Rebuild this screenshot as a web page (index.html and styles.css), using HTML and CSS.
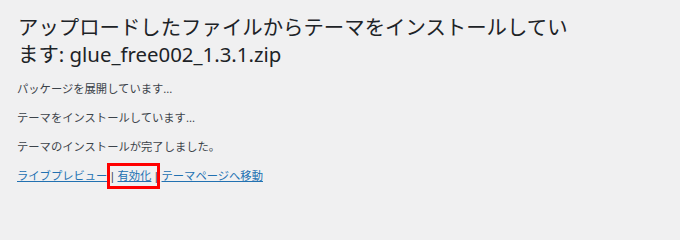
FILE: index.html
```html
<!DOCTYPE html>
<html lang="ja">
<head>
<meta charset="utf-8">
<link rel="stylesheet" href="styles.css">
</head>
<body>
<div class="wrap">
  <h1 class="title">アップロードしたファイルからテーマをインストールしています: glue_free002_1.3.1.zip</h1>
  <p class="msg">パッケージを展開しています...</p>
  <p class="msg">テーマをインストールしています...</p>
  <p class="msg">テーマのインストールが完了しました。</p>
  <p class="msg actions"><a href="#">ライブプレビュー</a> <span class="mark">| <a href="#">有効化</a> |</span> <a href="#">テーマページへ移動</a></p>
</div>
</body>
</html>
```
FILE: styles.css
```css
html, body {
  margin: 0;
  padding: 0;
  background: #f0f0f1;
}
body {
  font-family: "Noto Sans", "Noto Sans CJK JP", sans-serif;
  color: #3c434a;
}
.wrap {
  padding: 14px 20px 0 17px;
}
.title {
  margin: 0 0 12px 1px;
  font-size: 20.4px;
  font-weight: 400;
  line-height: 27px;
  color: #1d2327;
  width: 558px;
}
.msg {
  margin: 0 0 11px;
  font-size: 11.3px;
  line-height: 18px;
}
.actions {
  word-spacing: -1px;
}
.actions a {
  color: #2271b1;
  text-decoration: underline;
}
.mark {
  position: relative;
  color: #3c434a;
}
.mark::after {
  content: "";
  position: absolute;
  left: -2px;
  right: 0px;
  top: -5px;
  bottom: -6px;
  border: 3px solid #ff0000;
}
```
